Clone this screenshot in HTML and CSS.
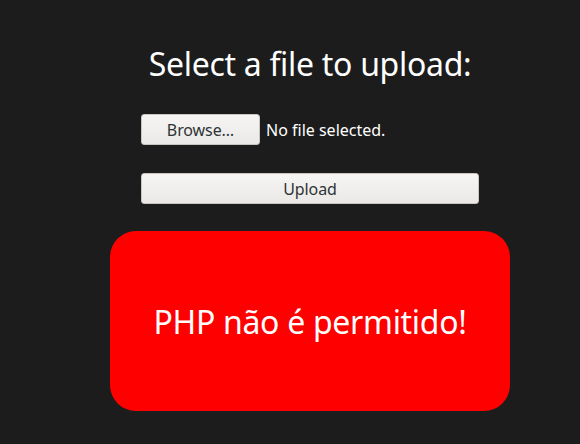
FILE: index.html
```html
<!DOCTYPE html>
<html>
<head>
<meta charset="utf-8">
<link rel="stylesheet" href="styles.css">
</head>
<body>
<main class="page">
  <h1 class="title">Select a file to upload:</h1>
  <form class="form">
    <div class="file-row">
      <span class="btn btn-browse">Browse…</span>
      <span class="file-name">No file selected.</span>
    </div>
    <span class="btn btn-upload">Upload</span>
  </form>
  <div class="alert">PHP não é permitido!</div>
</main>
</body>
</html>
```
FILE: styles.css
```css
html, body {
  margin: 0;
  padding: 0;
  background: #1c1c1c;
  height: 100%;
}
body {
  font-family: "Noto Sans", "DejaVu Sans", sans-serif;
  color: #ffffff;
}
.page {
  display: flex;
  flex-direction: column;
  align-items: center;
  padding-top: 42px;
  padding-left: 40px;
}
.title {
  margin: 0;
  font-size: 32px;
  font-weight: 400;
  line-height: 44px;
  letter-spacing: -0.3px;
}
.form {
  width: 338px;
  display: flex;
  flex-direction: column;
  margin-top: 28px;
}
.file-row {
  display: flex;
  align-items: center;
  gap: 6px;
}
.btn {
  box-sizing: border-box;
  display: flex;
  align-items: center;
  justify-content: center;
  height: 31px;
  border: 1px solid #c9c6c2;
  border-radius: 3px;
  background: linear-gradient(#f6f5f4, #ebe9e7);
  color: #2e3436;
  font-size: 16px;
  letter-spacing: -0.1px;
}
.btn-browse {
  width: 119px;
}
.file-name {
  font-size: 16px;
  letter-spacing: 0;
}
.btn-upload {
  margin-top: 28px;
  width: 338px;
}
.alert {
  box-sizing: border-box;
  width: 400px;
  height: 180px;
  margin-top: 27px;
  background: #ff0000;
  border-radius: 26px;
  display: flex;
  align-items: center;
  justify-content: center;
  font-size: 32px;
  letter-spacing: -0.3px;
}
```
